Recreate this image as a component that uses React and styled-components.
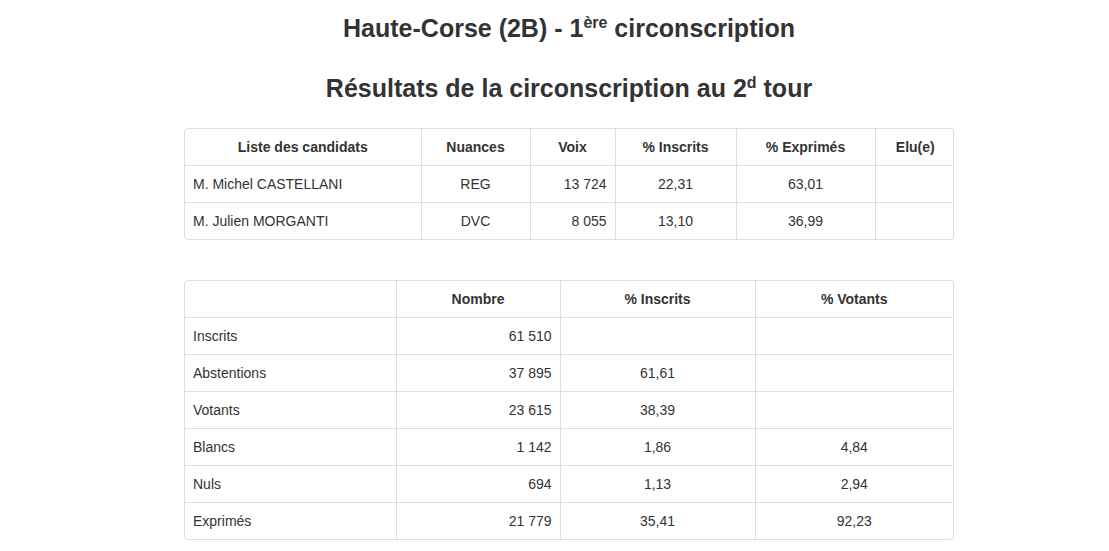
import React from "react";
import styled, { createGlobalStyle } from "styled-components";

const Global = createGlobalStyle`
  html, body { margin: 0; padding: 0; background: #fff; }
  body { font-family: "Liberation Sans", Arial, sans-serif; color: #333; font-size: 14px; line-height: 20px; }
`;

const Page = styled.div`
  width: 1109px;
  box-sizing: border-box;
  padding-left: 29px;
  display: flex;
  flex-direction: column;
  align-items: center;
`;

const Title = styled.h2`
  margin: ${(p) => p.$top}px 0 0;
  font-size: 25px;
  line-height: 26px;
  font-weight: bold;
  text-align: center;
  sup {
    font-size: 16px;
    line-height: 0;
    vertical-align: 9px;
  }
`;

const TableBox = styled.div`
  width: 770px;
  box-sizing: border-box;
  border: 1px solid #ddd;
  border-radius: 4px;
  overflow: hidden;
  margin-top: ${(p) => p.$top}px;
`;

const Table = styled.table`
  width: 100%;
  border-collapse: collapse;
  table-layout: fixed;
  th, td {
    padding: 8px;
    border: 1px solid #ddd;
    font-size: 14px;
    line-height: 20px;
    vertical-align: top;
  }
  tr:first-child th { border-top: none; }
  tr:last-child td { border-bottom: none; }
  th:first-child, td:first-child { border-left: none; }
  th:last-child, td:last-child { border-right: none; }
  th { font-weight: bold; text-align: center; }
`;

const Col = styled.col`
  width: ${(p) => p.$w}px;
`;

const Cell = styled.td`
  text-align: ${(p) => p.$align || "center"};
`;

const candidates = [
  ["M. Michel CASTELLANI", "REG", "13 724", "22,31", "63,01", ""],
  ["M. Julien MORGANTI", "DVC", "8 055", "13,10", "36,99", ""],
];

const stats = [
  ["Inscrits", "61 510", "", ""],
  ["Abstentions", "37 895", "61,61", ""],
  ["Votants", "23 615", "38,39", ""],
  ["Blancs", "1 142", "1,86", "4,84"],
  ["Nuls", "694", "1,13", "2,94"],
  ["Exprimés", "21 779", "35,41", "92,23"],
];

const candCols = [236, 109, 85, 121, 139, 80];
const statCols = [211, 164, 195, 198];

export default function App() {
  return (
    <Page>
      <Global />
      <Title $top={15}>
        Haute-Corse (2B) - 1<sup>ère</sup> circonscription
      </Title>
      <Title $top={34}>
        Résultats de la circonscription au 2<sup>d</sup> tour
      </Title>
      <TableBox $top={27}>
        <Table>
          <colgroup>
            {candCols.map((w, i) => (
              <Col key={i} $w={w} />
            ))}
          </colgroup>
          <thead>
            <tr>
              <th>Liste des candidats</th>
              <th>Nuances</th>
              <th>Voix</th>
              <th>% Inscrits</th>
              <th>% Exprimés</th>
              <th>Elu(e)</th>
            </tr>
          </thead>
          <tbody>
            {candidates.map((r) => (
              <tr key={r[0]}>
                <Cell $align="left">{r[0]}</Cell>
                <Cell>{r[1]}</Cell>
                <Cell $align="right">{r[2]}</Cell>
                <Cell>{r[3]}</Cell>
                <Cell>{r[4]}</Cell>
                <Cell>{r[5]}</Cell>
              </tr>
            ))}
          </tbody>
        </Table>
      </TableBox>
      <TableBox $top={40}>
        <Table>
          <colgroup>
            {statCols.map((w, i) => (
              <Col key={i} $w={w} />
            ))}
          </colgroup>
          <thead>
            <tr>
              <th></th>
              <th>Nombre</th>
              <th>% Inscrits</th>
              <th>% Votants</th>
            </tr>
          </thead>
          <tbody>
            {stats.map((r) => (
              <tr key={r[0]}>
                <Cell $align="left">{r[0]}</Cell>
                <Cell $align="right">{r[1]}</Cell>
                <Cell>{r[2]}</Cell>
                <Cell>{r[3]}</Cell>
              </tr>
            ))}
          </tbody>
        </Table>
      </TableBox>
    </Page>
  );
}
